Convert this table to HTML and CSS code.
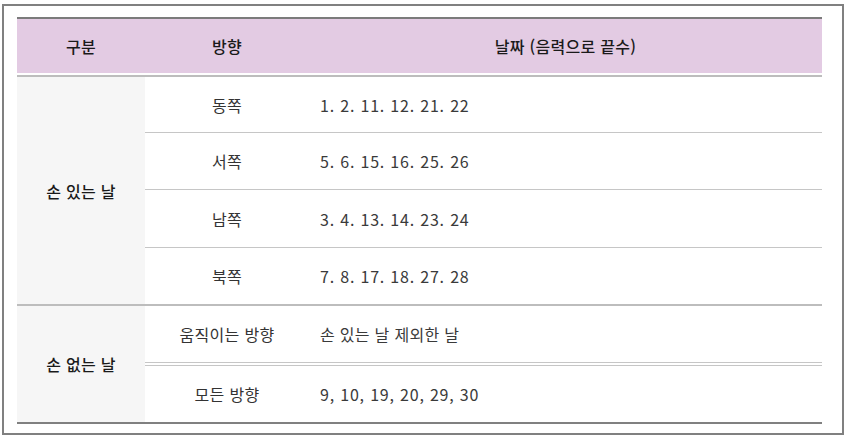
FILE: index.html
```html
<!DOCTYPE html>
<html lang="ko">
<head>
<meta charset="utf-8">
<link rel="stylesheet" href="styles.css">
</head>
<body>
<div class="frame">
  <table class="days">
    <colgroup>
      <col class="c1"><col class="c2"><col class="c3">
    </colgroup>
    <thead>
      <tr>
        <th>구분</th>
        <th>방향</th>
        <th>날짜 (음력으로 끝수)</th>
      </tr>
    </thead>
    <tbody>
      <tr class="r1">
        <td class="group" rowspan="4">손 있는 날</td>
        <td class="dir">동쪽</td>
        <td class="date num">1. 2. 11. 12. 21. 22</td>
      </tr>
      <tr class="r2">
        <td class="dir">서쪽</td>
        <td class="date num">5. 6. 15. 16. 25. 26</td>
      </tr>
      <tr class="r3">
        <td class="dir">남쪽</td>
        <td class="date num">3. 4. 13. 14. 23. 24</td>
      </tr>
      <tr class="r4">
        <td class="dir">북쪽</td>
        <td class="date num">7. 8. 17. 18. 27. 28</td>
      </tr>
      <tr class="r5">
        <td class="group last" rowspan="2">손 없는 날</td>
        <td class="dir">움직이는 방향</td>
        <td class="date">손 있는 날 제외한 날</td>
      </tr>
      <tr class="r6">
        <td class="dir">모든 방향</td>
        <td class="date num">9, 10, 19, 20, 29, 30</td>
      </tr>
    </tbody>
  </table>
</div>
</body>
</html>
```

FILE: styles.css
```css
html, body {
  margin: 0;
  padding: 0;
  background: #ffffff;
}

body {
  font-family: "Noto Sans CJK KR", "Noto Sans", sans-serif;
  font-size: 16px;
  letter-spacing: 0.3px;
  color: #333333;
}

.frame {
  box-sizing: border-box;
  width: 842px;
  height: 431px;
  margin: 4px 0 0 2px;
  border: 2px solid #808080;
  padding: 11px 20px 0 13px;
}

.days {
  width: 805px;
  border-collapse: separate;
  border-spacing: 0;
  table-layout: fixed;
}

.c1 { width: 128px; }
.c2 { width: 164px; }
.c3 { width: 513px; }

.days th {
  box-sizing: border-box;
  height: 58px;
  padding: 0;
  background: #e3cbe3;
  border-top: 2px solid #7b7b7b;
  border-bottom: 2px solid #ffffff;
  font-weight: 500;
  color: #1a1a1a;
  text-align: center;
  vertical-align: middle;
}

.days td {
  box-sizing: border-box;
  padding: 0;
  vertical-align: middle;
  line-height: 20px;
}

.days .r1 td {
  border-top: 2px solid #bdbdbd;
}

.group {
  background: #f6f6f6;
  text-align: center;
  font-weight: 500;
  color: #1a1a1a;
  border-bottom: 2px solid #bdbdbd;
}

.group.last {
  border-bottom: 2px solid #808080;
}

.dir {
  text-align: center;
  color: #333333;
}

.date {
  padding-left: 11px !important;
  text-align: left;
  color: #3a3a3a;
}

.num {
  letter-spacing: 0.8px;
}

.r1 .dir, .r1 .date { height: 58px; border-bottom: 1px solid #c6c6c6; }
.r2 .dir, .r2 .date { height: 57px; border-bottom: 1px solid #c6c6c6; }
.r3 .dir, .r3 .date { height: 58px; border-bottom: 1px solid #c6c6c6; }
.r4 .dir, .r4 .date { height: 58px; border-bottom: 2px solid #bdbdbd; }
.r5 .dir, .r5 .date { height: 56px; }
.r6 .dir, .r6 .date { height: 62px; border-top: 4px double #c6c6c6; border-bottom: 2px solid #808080; }
```
